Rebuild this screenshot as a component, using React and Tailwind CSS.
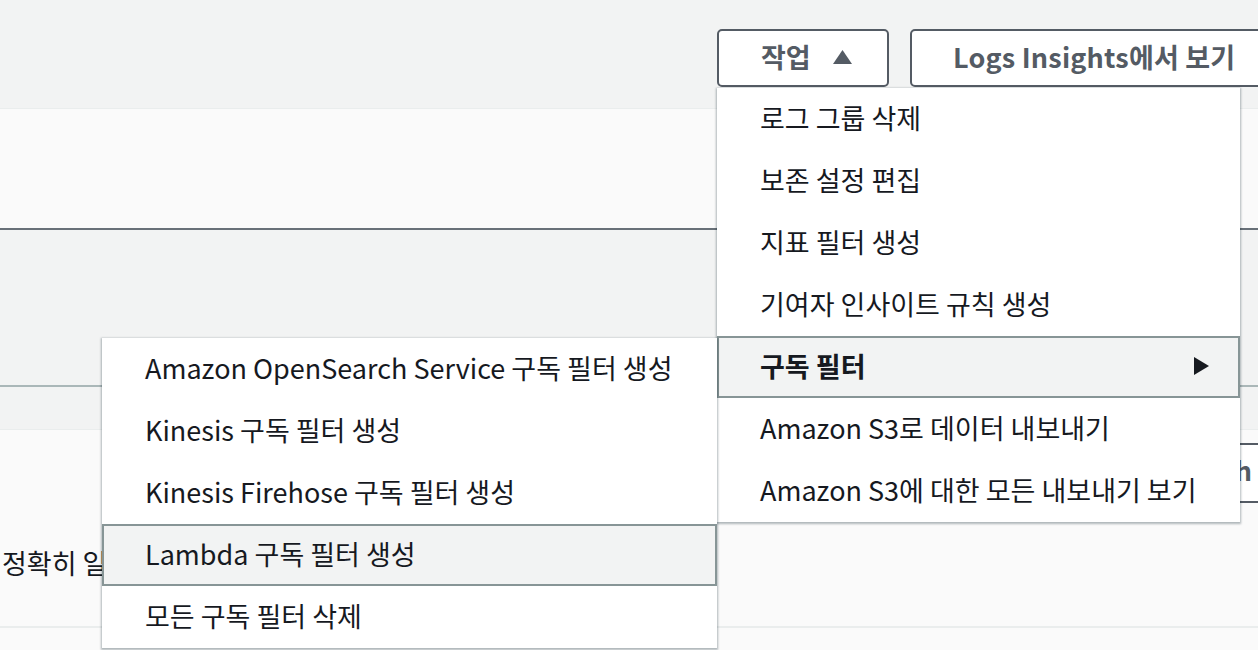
import React from 'react';

const font = { fontFamily: '"Noto Sans CJK KR", "Noto Sans", sans-serif' };

const mainItems = [
  { label: '로그 그룹 삭제' },
  { label: '보존 설정 편집' },
  { label: '지표 필터 생성' },
  { label: '기여자 인사이트 규칙 생성' },
  { label: '구독 필터', active: true, sub: true },
  { label: 'Amazon S3로 데이터 내보내기' },
  { label: 'Amazon S3에 대한 모든 내보내기 보기' },
];

const subItems = [
  { label: 'Amazon OpenSearch Service 구독 필터 생성' },
  { label: 'Kinesis 구독 필터 생성' },
  { label: 'Kinesis Firehose 구독 필터 생성' },
  { label: 'Lambda 구독 필터 생성', active: true },
  { label: '모든 구독 필터 삭제' },
];

const MenuItem = ({ item }) => (
  <li
    className={`flex items-center justify-between h-[62px] pl-[41px] pr-[28px] pb-[4px] text-[27px] text-[#16191f] ${
      item.active ? 'bg-[#f2f3f3] border-2 border-[#879596]' : 'border-2 border-transparent'
    } ${item.active && item.sub ? 'font-bold' : ''}`}
  >
    <span className="whitespace-nowrap leading-none">{item.label}</span>
    {item.sub && (
      <svg width="17" height="20" viewBox="0 0 17 20" className="shrink-0 mt-[2px]">
        <path d="M1 1 L16 10 L1 19 Z" fill="#16191f" />
      </svg>
    )}
  </li>
);

const App = () => {
  return (
    <div className="relative w-[1258px] h-[650px] overflow-hidden bg-[#f2f3f3]" style={font}>
      {/* header with actions */}
      <div className="h-[108px] flex justify-end gap-[21px] pt-[29px]">
        <button className="h-[58px] w-[172px] flex items-center gap-[21px] pl-[42px] pb-[4px] border-2 border-[#545b64] rounded-[5px] bg-white text-[27px] font-bold text-[#545b64]">
          <span className="leading-none">작업</span>
          <svg width="21" height="16" viewBox="0 0 21 16" className="mt-[2px]">
            <path d="M10.5 1 L20 15 L1 15 Z" fill="#545b64" />
          </svg>
        </button>
        <button className="h-[58px] w-[372px] shrink-0 -mr-[24px] flex items-center pl-[41px] pb-[4px] border-2 border-[#545b64] rounded-[5px] bg-white text-[27px] font-bold text-[#545b64] tracking-[0.2px]">
          <span className="whitespace-nowrap leading-none">Logs Insights에서 보기</span>
        </button>
      </div>

      {/* description band */}
      <div className="h-[122px] bg-[#fafafa] border-t border-[#eaeded] border-b-2 border-b-[#687078]" />

      {/* gray gap */}
      <div className="h-[157px] border-b-2 border-[#aab7b8]" />

      {/* table header */}
      <div className="h-[43px] border-b border-[#eaeded]" />

      {/* table body */}
      <div className="bg-[#fafafa] h-[220px]">
        <div className="h-[198px] border-b-2 border-[#eaeded] flex flex-col">
          <div className="flex justify-end pt-[13px]">
            <button className="h-[60px] w-[200px] -mr-[40px] pb-[8px] border-2 border-[#545b64] rounded-[5px] bg-white text-right pr-[44px] text-[27px] font-bold text-[#545b64] leading-none">
              Search
            </button>
          </div>
          <div className="mt-[46px] text-[27px] text-[#16191f] whitespace-nowrap leading-none pl-[2px]">
            정확히 일치하는 항목
          </div>
        </div>
      </div>

      {/* action menu */}
      <ul className="absolute left-[717px] top-[88px] w-[523px] bg-white shadow-[0_1px_2px_1px_rgba(0,28,36,0.3)]">
        {mainItems.map((it) => (
          <MenuItem key={it.label} item={it} />
        ))}
      </ul>

      {/* subscription filter submenu */}
      <ul className="absolute left-[102px] top-[338px] w-[615px] bg-white shadow-[0_1px_2px_1px_rgba(0,28,36,0.3)]">
        {subItems.map((it) => (
          <MenuItem key={it.label} item={it} />
        ))}
      </ul>
    </div>
  );
};

export default App;
